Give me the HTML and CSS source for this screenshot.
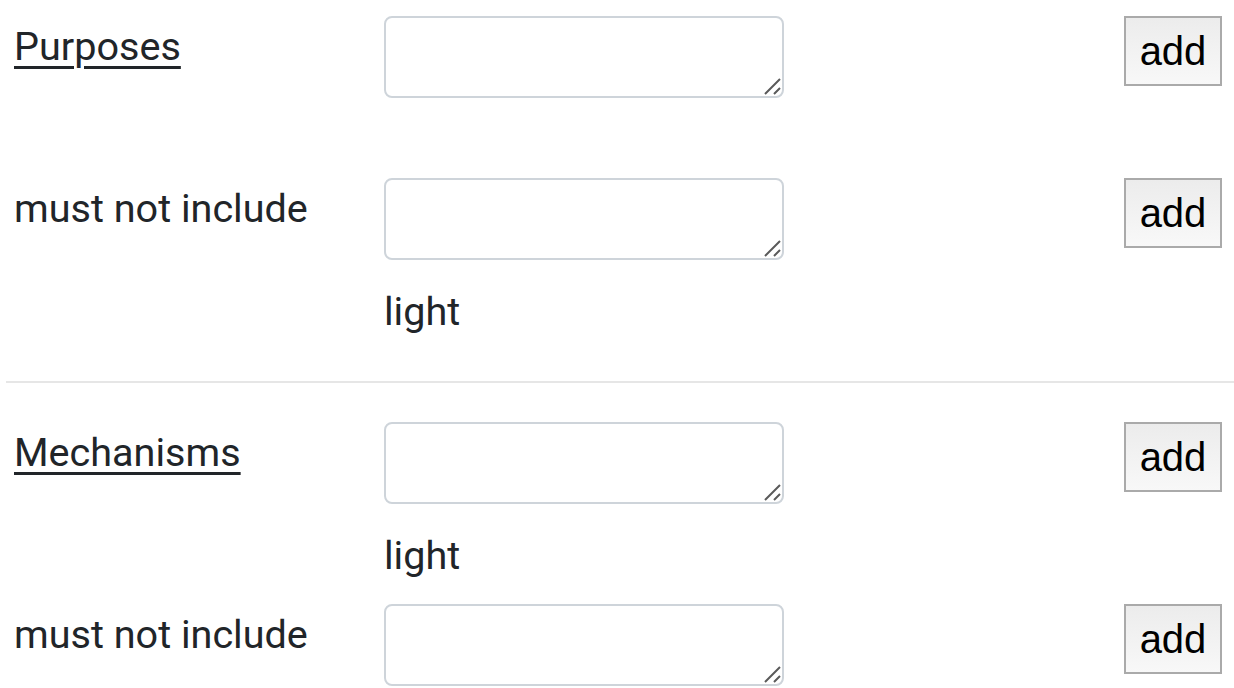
FILE: index.html
```html
<!DOCTYPE html>
<html>
<head>
<meta charset="utf-8">
<link rel="stylesheet" href="styles.css">
</head>
<body>
<div class="page">
  <section class="group">
    <div class="row">
      <div class="label"><a class="link" href="#">Purposes</a></div>
      <div class="field">
        <div class="boxwrap"><textarea class="box"></textarea><svg class="grip" width="18" height="18" viewBox="0 0 18 18"><path d="M2 17 L17 2 M11 17 L17 11" stroke="#5a5a5a" stroke-width="2" fill="none"/></svg></div>
      </div>
      <div class="action"><button class="btn">add</button></div>
    </div>
    <div class="row row-gap">
      <div class="label">must not include</div>
      <div class="field">
        <div class="boxwrap"><textarea class="box"></textarea><svg class="grip" width="18" height="18" viewBox="0 0 18 18"><path d="M2 17 L17 2 M11 17 L17 11" stroke="#5a5a5a" stroke-width="2" fill="none"/></svg></div>
        <div class="tag">light</div>
      </div>
      <div class="action"><button class="btn">add</button></div>
    </div>
  </section>
  <hr class="sep">
  <section class="group">
    <div class="row">
      <div class="label"><a class="link" href="#">Mechanisms</a></div>
      <div class="field">
        <div class="boxwrap"><textarea class="box"></textarea><svg class="grip" width="18" height="18" viewBox="0 0 18 18"><path d="M2 17 L17 2 M11 17 L17 11" stroke="#5a5a5a" stroke-width="2" fill="none"/></svg></div>
        <div class="tag">light</div>
      </div>
      <div class="action"><button class="btn">add</button></div>
    </div>
    <div class="row row-tight">
      <div class="label">must not include</div>
      <div class="field">
        <div class="boxwrap"><textarea class="box"></textarea><svg class="grip" width="18" height="18" viewBox="0 0 18 18"><path d="M2 17 L17 2 M11 17 L17 11" stroke="#5a5a5a" stroke-width="2" fill="none"/></svg></div>
      </div>
      <div class="action"><button class="btn">add</button></div>
    </div>
  </section>
</div>
</body>
</html>
```
FILE: styles.css
```css
* { box-sizing: border-box; }
html, body { margin: 0; padding: 0; background: #fff; }
body {
  font-family: Roboto, "Liberation Sans", sans-serif;
  font-size: 39.6px;
  line-height: 1.5;
  color: #212529;
  overflow: hidden;
}
.page { padding: 16px 0 0 6px; }
.row {
  display: grid;
  grid-template-columns: 378px 400px 1fr auto;
  padding-right: 12px;
}
.row-gap { margin-top: 80px; }
.row-tight { margin-top: 18px; }
.label { padding-left: 8px; line-height: 62px; }
.link { color: #212529; text-decoration: underline; text-decoration-thickness: 3px; text-underline-offset: 6px; }
.field { display: flex; flex-direction: column; }
.boxwrap { position: relative; width: 400px; height: 82px; }
.box {
  display: block;
  width: 400px;
  height: 82px;
  border: 2px solid #ced4da;
  border-radius: 8px;
  resize: none;
  font: inherit;
  margin: 0;
  background: #fff;
}
.grip { position: absolute; right: 3px; bottom: 3px; }
.tag { margin-top: 22px; line-height: 60px; }
.action { grid-column: 4; }
.btn {
  font-family: "Liberation Sans", Arial, sans-serif;
  font-size: 40px;
  width: 98px;
  height: 70px;
  padding: 0;
  border: 2px solid #aaa;
  border-radius: 0;
  background: linear-gradient(#ececec, #f8f8f8);
  color: #000;
}
.sep {
  margin: 39px 0 39px;
  border: 0;
  border-top: 2px solid #e6e6e6;
}
```
